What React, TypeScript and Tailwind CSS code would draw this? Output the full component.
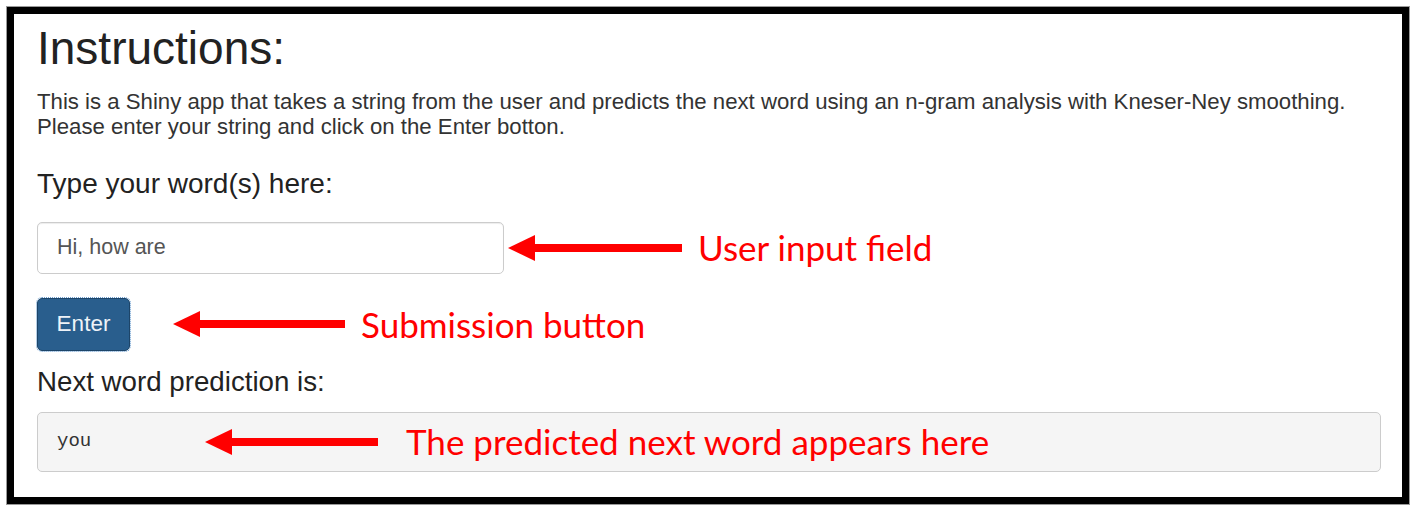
import type { ReactNode } from 'react';

type ArrowProps = {
  length: number;
  className?: string;
};

// red callout arrow pointing left
function Arrow({ length, className = '' }: ArrowProps) {
  return (
    <svg width={length} height={26} viewBox={`0 0 ${length} 26`} className={`shrink-0 ${className}`}>
      <polygon points="0,13 27,0 27,26" fill="#ff0000" />
      <rect x={26} y={9} width={length - 26} height={8} fill="#ff0000" />
    </svg>
  );
}

function Note({ children, className = '' }: { children: ReactNode; className?: string }) {
  return (
    <span className={`whitespace-nowrap font-['Lato',sans-serif] text-[35px] leading-none text-[#ff0000] ${className}`}>
      {children}
    </span>
  );
}

export default function App() {
  return (
    <div className="h-[513px] w-[1419px] bg-white font-['Liberation_Sans',Arial,sans-serif] text-[#333]">
      <div className="ml-[7px] w-[1402px] pt-[7px]">
        <div className="border-[7px] border-black pb-[25px] pl-[23px] pr-[21px] pt-[9px] shadow-[0_0_0_1px_#9a9a9a]">
          <h1 className="text-[46px] font-normal leading-[1.1] text-[#222]">Instructions:</h1>

          <p className="mt-[15px] text-[22.2px] leading-[25px]">
            This is a Shiny app that takes a string from the user and predicts the next word using an n-gram analysis with Kneser-Ney smoothing.
            <br />
            Please enter your string and click on the Enter botton.
          </p>

          <label className="mt-[30px] block text-[28px] leading-[30px] text-[#222]">Type your word(s) here:</label>

          <div className="mt-[23px] flex items-center">
            <div className="flex h-[52px] w-[467px] items-center rounded-[5px] border border-[#cccccc] bg-white px-[19px] text-[21.5px] text-[#555] shadow-[inset_0_1px_1px_rgba(0,0,0,0.075)]">
              Hi, how are
            </div>
            <Arrow length={174} className="ml-[4px]" />
            <Note className="ml-[16px]">User input field</Note>
          </div>

          <div className="mt-[24px] flex items-center">
            <button
              type="button"
              className="h-[53px] w-[93px] rounded-[5px] border border-[#1d4569] bg-[#295e8d] text-[22.5px] text-[#eef3f8] outline-1 outline-dotted outline-[#6d9fd0]"
            >
              Enter
            </button>
            <Arrow length={172} className="ml-[43px]" />
            <Note className="ml-[16px]">Submission button</Note>
          </div>

          <div className="mt-[16px] text-[27.7px] leading-[30px] text-[#222]">Next word prediction is:</div>

          <div className="mt-[15px] flex h-[60px] items-center rounded-[5px] border border-[#cccccc] bg-[#f5f5f5] px-[19px]">
            <span className="w-[148px] font-['Liberation_Mono','Courier_New',monospace] text-[19px] text-[#333]">you</span>
            <Arrow length={173} />
            <Note className="ml-[28px]">The predicted next word appears here</Note>
          </div>
        </div>
      </div>
    </div>
  );
}
